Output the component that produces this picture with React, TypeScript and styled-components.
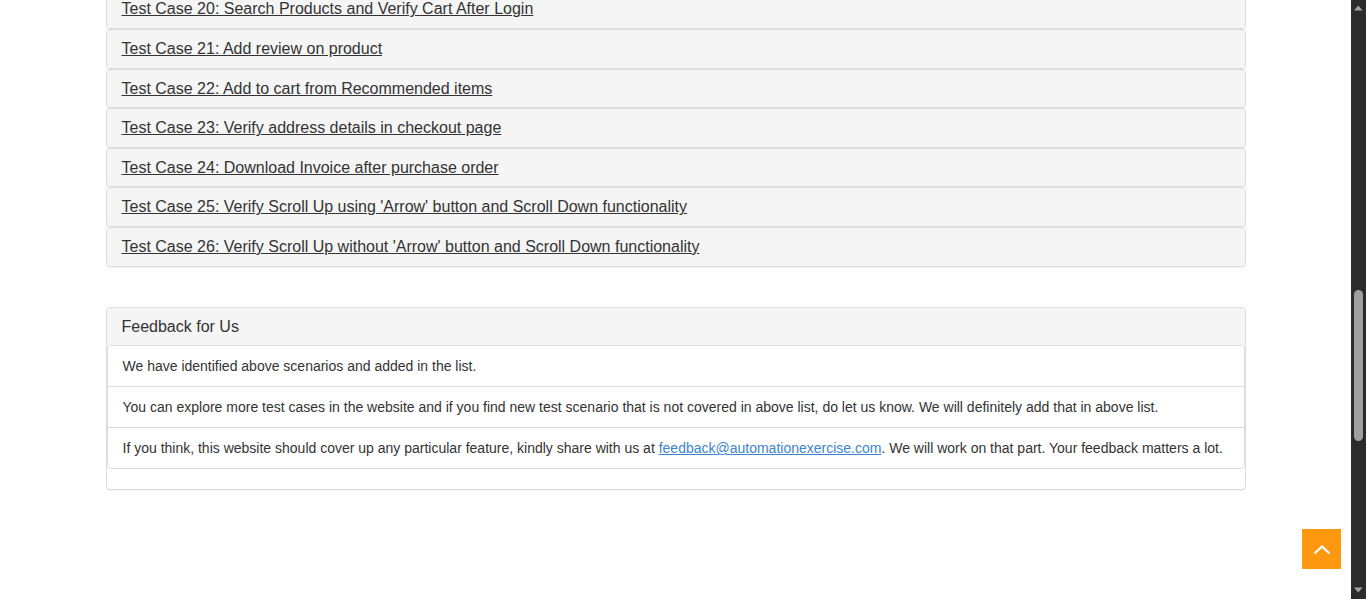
import React from "react";
import styled, { createGlobalStyle } from "styled-components";

const GlobalStyle = createGlobalStyle`
  html, body {
    margin: 0;
    padding: 0;
    height: 100%;
    overflow: hidden;
    background: #fff;
  }
  body {
    font-family: "Liberation Sans", Arial, Helvetica, sans-serif;
    color: #333;
    font-size: 14px;
    line-height: 1.42857;
  }
  * { box-sizing: border-box; }
`;

const Viewport = styled.div`
  display: flex;
  height: 100vh;
  width: 100vw;
`;

const Main = styled.main`
  flex: 1;
  min-width: 0;
  overflow: hidden;
`;

const Container = styled.div`
  width: 1170px;
  padding: 0 15px;
  margin: 0 auto;
`;

const PanelGroup = styled.div`
  margin-top: -10.6px;
  display: flex;
  flex-direction: column;
`;

const Panel = styled.div<{ $spaced?: boolean }>`
  background: #fff;
  border: 1px solid #ddd;
  border-radius: 4px;
  box-shadow: 0 1px 1px rgba(0, 0, 0, 0.05);
  margin-top: ${(p) => (p.$spaced ? "40px" : "0")};
  overflow: hidden;
`;

const PanelHeading = styled.div`
  background: #f5f5f5;
  padding: 10px 15px;
  border-top-left-radius: 3px;
  border-top-right-radius: 3px;
`;

const PanelTitle = styled.h4`
  margin: 0;
  font-size: 16px;
  font-weight: 400;
  line-height: 1.1;
  color: #333;
`;

const TitleLink = styled.a`
  color: #333;
  text-decoration: underline;
`;

const ListGroup = styled.ul`
  list-style: none;
  margin: 0 0 20px;
  padding: 0;
  border: 1px solid #ddd;
  border-radius: 4px;
`;

const ListItem = styled.li`
  padding: 10px 15px;
  line-height: 20px;
  font-size: 14px;
  color: #333;
  & + & {
    border-top: 1px solid #ddd;
  }
`;

const MailLink = styled.a`
  color: #3c85cc;
  text-decoration: underline;
`;

const Scrollbar = styled.div`
  width: 15px;
  flex: 0 0 15px;
  background: #2b2b2b;
  display: flex;
`;

const ScrollUp = styled.a`
  position: fixed;
  right: 25px;
  bottom: 30px;
  width: 39px;
  height: 40px;
  background: #fe980f;
  display: flex;
  align-items: center;
  justify-content: center;
`;

const cases = [
  "Test Case 20: Search Products and Verify Cart After Login",
  "Test Case 21: Add review on product",
  "Test Case 22: Add to cart from Recommended items",
  "Test Case 23: Verify address details in checkout page",
  "Test Case 24: Download Invoice after purchase order",
  "Test Case 25: Verify Scroll Up using 'Arrow' button and Scroll Down functionality",
  "Test Case 26: Verify Scroll Up without 'Arrow' button and Scroll Down functionality",
];

export default function App() {
  return (
    <>
      <GlobalStyle />
      <Viewport>
        <Main>
          <Container>
            <PanelGroup>
              {cases.map((c) => (
                <Panel key={c}>
                  <PanelHeading>
                    <PanelTitle>
                      <TitleLink href="#">{c}</TitleLink>
                    </PanelTitle>
                  </PanelHeading>
                </Panel>
              ))}
            </PanelGroup>
            <Panel $spaced>
              <PanelHeading>
                <PanelTitle>Feedback for Us</PanelTitle>
              </PanelHeading>
              <ListGroup>
                <ListItem>We have identified above scenarios and added in the list.</ListItem>
                <ListItem>
                  You can explore more test cases in the website and if you find new test scenario that is not covered in above list, do let us know. We will definitely add that in above list.
                </ListItem>
                <ListItem>
                  If you think, this website should cover up any particular feature, kindly share with us at{" "}
                  <MailLink href="#">feedback@automationexercise.com</MailLink>. We will work on that part. Your feedback matters a lot.
                </ListItem>
              </ListGroup>
            </Panel>
          </Container>
        </Main>
        <Scrollbar>
          <svg width="15" height="599" viewBox="0 0 15 599">
            <polygon points="3,10.5 11.5,10.5 7.25,5.5" fill="#a3a3a3" />
            <rect x="3" y="290" width="9" height="151" rx="4.5" fill="#9f9f9f" />
            <polygon points="3,587.5 11.5,587.5 7.25,592.5" fill="#a3a3a3" />
          </svg>
        </Scrollbar>
      </Viewport>
      <ScrollUp href="#">
        <svg width="18" height="11" viewBox="0 0 18 11">
          <polyline points="1.5,9.5 9,2.5 16.5,9.5" fill="none" stroke="#fff" strokeWidth="2.2" />
        </svg>
      </ScrollUp>
    </>
  );
}
